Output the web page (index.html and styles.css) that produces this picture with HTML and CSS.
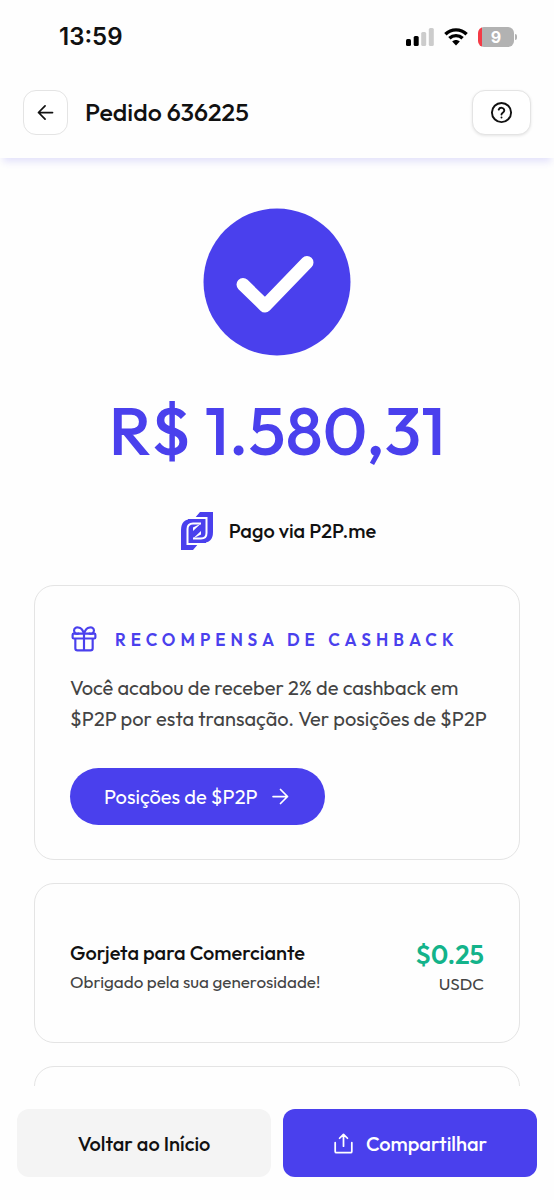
FILE: index.html
```
<!DOCTYPE html>
<html lang="pt-BR">
<head>
<meta charset="utf-8">
<meta name="viewport" content="width=device-width, initial-scale=1">
<title>Pedido 636225</title>
<link rel="stylesheet" href="styles.css">
</head>
<body>
<div class="screen">
  <div class="status-bar">
    <span class="clock">13:59</span>
    <div class="indicators">
      <svg class="signal" viewBox="0 0 28 18" aria-hidden="true">
        <rect x="0" y="11" width="5" height="7" rx="1.5"/>
        <rect x="7.7" y="8" width="5" height="10" rx="1.5"/>
        <rect class="faint" x="15.2" y="4" width="5" height="14" rx="1.5"/>
        <rect class="faint" x="22.8" y="0" width="5" height="18" rx="1.5"/>
      </svg>
      <svg class="wifi" viewBox="0 0 24 18" aria-hidden="true">
        <path class="arc" d="M1.4 6.2C7.3.4 16.7.4 22.6 6.2M5.4 10.2c3.7-3.5 9.5-3.5 13.2 0"/>
        <path d="M8.2 13.4c2.3-2 5.3-2 7.6 0L12 17.6z"/>
      </svg>
      <div class="battery"><span class="battery-body">9</span><span class="battery-cap"></span></div>
    </div>
  </div>

  <header class="header">
    <button class="icon-button" type="button" aria-label="Voltar">
      <svg class="icon icon-stroke" viewBox="0 0 24 24"><path d="M11.500 19.500L4 12l7.500-7.500M4 12h16"/></svg>
    </button>
    <h1 class="title">Pedido 636225</h1>
    <button class="icon-button icon-button-wide" type="button" aria-label="Ajuda">
      <svg class="icon icon-help icon-stroke" viewBox="0 0 24 24"><circle cx="12" cy="12" r="10"/><path d="M9.1 9a3 3 0 0 1 5.8 1c0 2-2.9 2.5-2.9 4M12 17.2h.01"/></svg>
    </button>
  </header>

  <main class="content">
    <section class="summary">
      <svg class="success" viewBox="0 0 148 148" role="img" aria-label="Pagamento concluído">
        <circle cx="74" cy="74" r="73.5"/>
        <path d="M40 76.500l22 21.500 42-43.500"/>
      </svg>
      <p class="amount">R$ 1.580,31</p>
      <div class="paid-via">
        <svg class="brand" viewBox="0 0 32 38" aria-hidden="true">
          <path d="M0 38V18Q0 7 11 7h14v24h-7l-6 7z"/>
          <path d="M32 0v20q0 11-11 11H7V7h6l6-7z"/>
          <path class="brand-line" d="M13 6h12.500v15q0 5.500-5.500 5.500H12M19 32H6.500V17q0-5.500 5.500-5.500h8"/>
          <path class="brand-cut" d="M20 11.500l-8 7.500v-3.500zM12 26.500l8-7.500v3.500z"/>
        </svg>
        <span>Pago via P2P.me</span>
      </div>
    </section>

    <section class="card">
      <h2 class="card-label">
        <svg class="gift icon-stroke" viewBox="0 0 24 24" aria-hidden="true"><rect x="1.500" y="7" width="21" height="4.500" rx="1"/><path d="M12 7v15.500M20 12v8.500a2 2 0 0 1-2 2H6a2 2 0 0 1-2-2V12M7 7a3 3 0 1 1 0-5.500c3 0 4 2.500 5 5.500 1-3 2-5.500 5-5.500A3 3 0 1 1 17 7"/></svg>
        <span>RECOMPENSA DE CASHBACK</span>
      </h2>
      <p class="card-text">Você acabou de receber 2% de cashback em $P2P por esta transação. Ver posições de $P2P</p>
      <button class="pill" type="button">
        <span>Posições de $P2P</span>
        <svg class="icon icon-stroke" viewBox="0 0 24 24" aria-hidden="true"><path d="M12 4l8 8-8 8M3.500 12H20"/></svg>
      </button>
    </section>

    <section class="card tip">
      <div>
        <h2 class="tip-title">Gorjeta para Comerciante</h2>
        <p class="tip-note">Obrigado pela sua generosidade!</p>
      </div>
      <div class="tip-value">
        <p class="tip-amount">$0.25</p>
        <p class="tip-currency">USDC</p>
      </div>
    </section>

    <section class="card card-next" aria-hidden="true"></section>
  </main>

  <footer class="actions">
    <button class="action" type="button">Voltar ao Início</button>
    <button class="action action-primary" type="button">
      <svg class="icon icon-stroke" viewBox="0 0 24 24" aria-hidden="true"><path d="M12 15V2M7.500 6L12 1.500 16.500 6M2.500 11v10A1.500 1.500 0 0 0 4 22.500h16a1.500 1.500 0 0 0 1.500-1.500V11"/></svg>
      <span>Compartilhar</span>
    </button>
  </footer>
</div>
</body>
</html>
```
FILE: styles.css
```
:root {
  --brand: #4a40ed;
  --ink: #111;
  --muted: #444;
  --line: #e4e4e4;
}

* { box-sizing: border-box; }

body, h1, h2, p { margin: 0; }

body {
  background: #fefefe;
  color: var(--ink);
  font-family: Outfit, Lato, sans-serif;
}

button { font: inherit; border: 0; padding: 0; cursor: pointer; }

.screen {
  display: flex;
  flex-direction: column;
  height: 100vh;
}

.status-bar {
  display: flex;
  align-items: center;
  justify-content: space-between;
  height: 74px;
  padding: 0 37px 0 59px;
}

.clock { font: 600 24px/28px Inter, sans-serif; }

.indicators { display: flex; align-items: center; gap: 10px; }
.signal { width: 28px; height: 18px; }
.faint { fill: #ccc; }
.wifi { width: 24px; height: 18px; }
.arc { fill: none; stroke: #000; stroke-width: 3.4; }

.battery { display: flex; align-items: center; gap: 1px; }
.battery-body {
  width: 36px;
  border-radius: 6px;
  background: linear-gradient(to right, #f43b46 4px, #b2b2b2 4px);
  color: #fff;
  font: 700 16px/20px Inter, sans-serif;
  text-align: center;
}
.battery-cap { width: 2px; height: 6px; border-radius: 0 2px 2px 0; background: #b2b2b2; }

.header {
  display: flex;
  align-items: center;
  gap: 17px;
  height: 84px;
  padding: 0 23px 7px;
  box-shadow: 0 7px 7px -3px #4a40ed24;
}

.icon-button {
  display: grid;
  place-items: center;
  width: 45px;
  height: 45px;
  border: 1px solid var(--line);
  border-radius: 13px;
  background: #fff;
  color: var(--ink);
}
.icon-button-wide { width: 59px; margin-left: auto; box-shadow: 0 1px 3px #0000001a; }

.icon { width: 21px; height: 21px; }
.icon-help { width: 23px; height: 23px; }
.icon-stroke {
  fill: none;
  stroke: currentColor;
  stroke-width: 2;
  stroke-linecap: round;
  stroke-linejoin: round;
}

.title { font-size: 25px; font-weight: 500; line-height: 32px; padding-bottom: 2px; }

.content {
  flex: 1;
  min-height: 0;
  overflow: hidden;
  display: flex;
  flex-direction: column;
  gap: 23px;
  padding: 50px 34px 0;
}

.summary { display: flex; flex-direction: column; align-items: center; padding-bottom: 12px; }
.success { width: 148px; height: 148px; fill: var(--brand); }
.success path {
  fill: none;
  stroke: #fff;
  stroke-width: 13;
  stroke-linecap: round;
  stroke-linejoin: round;
}
.amount {
  margin-top: 30px;
  color: var(--brand);
  font-size: 68px;
  font-weight: 500;
  line-height: 88px;
}
.paid-via {
  display: flex;
  align-items: center;
  gap: 16px;
  margin-top: 38px;
  padding-left: 3px;
  font-size: 20px;
  font-weight: 500;
  line-height: 28px;
}
.brand { width: 32px; height: 38px; fill: var(--brand); }
.brand-line { fill: none; stroke: #fff; stroke-width: 2; }
.brand .brand-cut { fill: #fff; }

.card {
  flex: none;
  border: 1px solid var(--line);
  border-radius: 20px;
  padding: 34px 35px;
}

.card-label {
  display: flex;
  align-items: center;
  gap: 18px;
  height: 38px;
  padding-left: 1px;
  color: var(--brand);
  font-size: 17px;
  font-weight: 600;
  letter-spacing: 5px;
  white-space: nowrap;
}
.gift { width: 26px; height: 26px; }

.card-text {
  margin: 14px -8px 0 0;
  color: var(--muted);
  font-size: 20px;
  line-height: 31px;
}

.pill {
  display: flex;
  align-items: center;
  gap: 12px;
  height: 57px;
  margin-top: 34px;
  padding: 0 34px;
  border-radius: 29px;
  background: var(--brand);
  color: #fff;
  font-size: 20px;
}

.tip {
  display: flex;
  align-items: center;
  justify-content: space-between;
  padding: 54px 35px 46px;
}
.tip-title { font-size: 20px; font-weight: 500; line-height: 30px; }
.tip-note { color: var(--muted); font-size: 17px; line-height: 28px; }
.tip-value { text-align: right; }
.tip-amount { color: #13b38a; font-size: 26px; font-weight: 600; line-height: 34px; }
.tip-currency { color: var(--muted); font-size: 17px; line-height: 24px; }

.card-next { height: 160px; }

.actions {
  display: flex;
  gap: 12px;
  padding: 23px 17px;
}
.action {
  display: flex;
  flex: 1;
  align-items: center;
  justify-content: center;
  gap: 12px;
  height: 68px;
  border-radius: 12px;
  background: #f4f4f4;
  color: var(--ink);
  font-size: 20px;
  font-weight: 500;
}
.action-primary { background: var(--brand); color: #fff; }
```
